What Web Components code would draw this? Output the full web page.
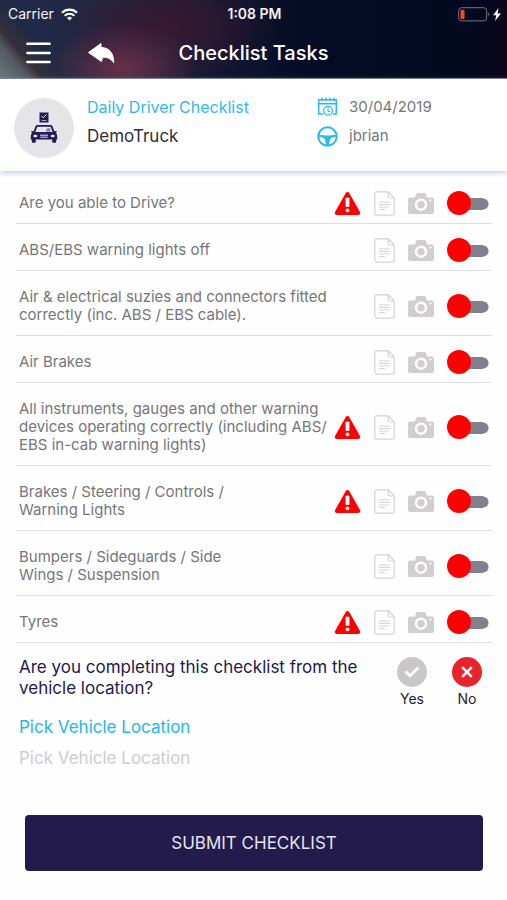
<!DOCTYPE html>
<html lang="en">
<head>
<meta charset="utf-8">
<meta name="viewport" content="width=device-width, initial-scale=1">
<title>Checklist Tasks</title>
<style>
  body { margin: 0; background: #fefefe; color: #76767a; font: 15px/18px Inter, "Liberation Sans", sans-serif; }
</style>
</head>
<body>
<checklist-app></checklist-app>
<script>
const define = (name, html, setup) => {
  const template = document.createElement('template');
  template.innerHTML = '<style>*{box-sizing:border-box}svg{display:block}button{border:0;padding:0;background:none;font:inherit;color:inherit;cursor:pointer}</style>' + html;
  customElements.define(name, class extends HTMLElement {
    constructor() {
      super();
      this.attachShadow({ mode: 'open' }).append(template.content.cloneNode(true));
    }
    connectedCallback() { if (setup) setup(this, this.shadowRoot); }
  });
};

define('status-bar', `
<style>
  :host { display: grid; grid-template-columns: 1fr auto 1fr; align-items: center; height: 28px; padding: 0 6px 0 8px; color: #f3f3f7; font-size: 14px; }
  .carrier, .power { display: flex; align-items: center; gap: 7px; }
  .power { justify-content: flex-end; gap: 3px; }
  time { font-weight: 600; }
</style>
<div class="carrier"><span>Carrier</span>
  <svg width="17" height="13" viewBox="0 0 17 13" fill="none" stroke="#fff" stroke-width="2.2"><path d="M1 4.7a10.8 10.8 0 0 1 15 0M3.7 7.7a6.9 6.9 0 0 1 9.6 0"/><path d="M8.5 12.6 6 10a3.6 3.6 0 0 1 5 0z" fill="#fff" stroke="none"/></svg>
</div>
<time>1:08 PM</time>
<div class="power">
  <svg width="32" height="15" viewBox="0 0 32 15"><rect x=".7" y=".7" width="28" height="13.2" rx="3" fill="none" stroke="#777583"/><rect x="2.5" y="2.7" width="4" height="9.2" rx="1" fill="#f04a32"/><path d="M30.3 5.2q2 2 0 4.5z" fill="#777583"/></svg>
  <svg width="8" height="13" viewBox="0 0 8 13"><path d="M5.5 0 0 7.2h3.3L2 13l6-7.6H4.6z" fill="#fff"/></svg>
</div>`);

define('app-header', `
<style>
  :host { display: block; color: #fff; border-bottom: 1px solid #68748e;
    background:
      linear-gradient(49deg, #6b7880 0, #535960 22px, #37303a 32px, transparent 50px),
      radial-gradient(ellipse 75px 44px at 123px 68px, #673047, transparent),
      radial-gradient(ellipse 110px 55px at 165px 26px, #3a1831, transparent),
      linear-gradient(90deg, #202b47, #202542 25%, #131530 45%, #040b24 62%, #020a20 90%, #09051b); }
  .bar { display: grid; grid-template-columns: 1fr auto 1fr; align-items: center; height: 50px; }
  .actions { display: flex; align-items: center; gap: 36px; padding-left: 26px; }
  h1 { margin: 0; font-size: 20px; line-height: 24px; font-weight: 500; }
</style>
<status-bar></status-bar>
<div class="bar">
  <div class="actions">
    <button aria-label="Menu"><svg width="25" height="22" viewBox="0 0 25 22" stroke="#fff" stroke-width="2.5" stroke-linecap="round"><path d="M1.4 1.7h22.2M1.4 10.9h22.2M1.4 20h22.2"/></svg></button>
    <button aria-label="Back"><svg width="28" height="22" viewBox="0 0 28 22" fill="#fff"><path d="M1.5 10.500 14 1.500v4C22 5.500 26.800 11 26.700 20.800 24.300 16.600 19.500 14.900 15.500 15.300L14.500 19.500z" stroke="#fff" stroke-linejoin="round"/></svg></button>
  </div>
  <h1>Checklist Tasks</h1>
</div>`);

define('vehicle-summary', `
<style>
  :host { display: grid; grid-template-columns: 60px 1fr 176px; align-items: center; column-gap: 13px; height: 92px; padding: 0 14px; background: #fff; box-shadow: 0 2px 5px #c1d0e2; position: relative; }
  .avatar { display: grid; place-items: center; width: 60px; height: 60px; border-radius: 50%; background: #e5e4e9; margin-top: 5px; }
  .names, .facts { display: grid; row-gap: 5px; margin-bottom: 7px; }
  .names { font-size: 17px; line-height: 24px; color: #303034; }
  h2 { margin: 0; font-size: 16px; line-height: 24px; font-weight: 400; color: #31b9ed; }
  .facts div { display: flex; align-items: center; gap: 11px; height: 24px; }
</style>
<div class="avatar">
  <svg width="28" height="34" viewBox="0 0 28 34"><g fill="#251b58"><path d="M9.500 1.500h9v10h-9z"/><path fill-rule="evenodd" d="M7.300 14h13.400q1.300 0 1.800 1.300l1.900 5 1.800-.3q1.600.8-.3 1.900 1.300 1.100 1.300 3v3.600h-1v2.200q0 1-1 1h-2q-1 0-1-1v-2.200H5.800v2.200q0 1-1 1h-2q-1 0-1-1v-2.200h-1v-3.600q0-1.900 1.300-3-1.900-1.100-.3-1.900l1.800.3 1.900-5Q6 14 7.300 14m.5 1.700q-.5 0-.7.6L5.400 21h17.200l-1.700-4.700q-.2-.6-.7-.6z"/></g><path d="m11.500 5 1.800 1.800 3.200-3.300" fill="none" stroke="#eee"/><path d="M11.500 9.500h5" stroke="#a8a4bd"/><path d="M10 24.200h8M10.300 26.200h7.400" stroke="#e6e4ed"/><ellipse cx="5.300" cy="25" rx="2" ry="1.300" fill="#eeedf2"/><ellipse cx="22.700" cy="25" rx="2" ry="1.300" fill="#eeedf2"/><path d="M16 20.500q0-3.500 2.500-3.500t2 3.500" fill="#8c86a8"/></svg>
</div>
<div class="names"><h2>Daily Driver Checklist</h2><span>DemoTruck</span></div>
<div class="facts">
  <div><svg width="21" height="20" viewBox="0 0 21 20" fill="none" stroke="#27baf0" stroke-width="1.5"><path d="M6 17H1.700V2.700h17.600V17H16M1.500 6.800h18"/><path d="M5 .5v4M9 .5v4M13 .5v4M17 .5v4" stroke-width="1.300"/><circle cx="11" cy="13.800" r="4.400" stroke-width="1.200"/><path d="M11 11v3.500h2.200" stroke-width="1"/></svg><span>30/04/2019</span></div>
  <div><svg width="21" height="21" viewBox="0 0 21 21" fill="none" stroke="#27baf0"><circle cx="10.500" cy="10.500" r="9.200" stroke-width="2"/><path d="M1.500 9.200Q4 8.600 7 9.200q3.500.8 7 0 3-.6 5.500 0v1.600Q14 11 12.800 14l-.8 5.500H9L8.200 14Q7 11 1.500 10.800z" fill="#27baf0" stroke="none"/></svg><span>jbrian</span></div>
</div>`);

define('toggle-switch', `
<style>
  :host { display: block; height: 24px; }
  input { appearance: none; display: flex; align-items: center; margin: 0; width: 42px; height: 24px; cursor: pointer;
    background: linear-gradient(#81808c, #81808c) 12px 7px / 24px 12px no-repeat, radial-gradient(circle at 36px 13px, #81808c 5px, transparent 6px); }
  input::before { content: ""; width: 24px; height: 24px; border-radius: 50%; background: #fe0000; }
  input:checked { justify-content: flex-end; }
</style>
<input type="checkbox" role="switch">`, (host, root) => root.querySelector('input').setAttribute('aria-label', host.getAttribute('label')));

define('check-row', `
<style>
  :host { display: flex; align-items: center; justify-content: space-between; padding: 17px 3px 11px; border-bottom: 1px solid #dedee0; }
  p { margin: 0; }
  .tools { display: grid; grid-template-columns: 27px 21px 26px 42px; align-items: center; align-content: center; justify-content: end; column-gap: 13px; height: 18px; flex: none; }
  .warn { visibility: hidden; }
  :host([warning]) .warn { visibility: visible; }
</style>
<p><slot></slot></p>
<div class="tools">
  <svg class="warn" role="img" aria-label="Warning" width="27" height="25" viewBox="0 0 27 25"><path d="M13.500 3 24.200 22H2.800z" fill="#fe0000" stroke="#fe0000" stroke-width="4" stroke-linejoin="round"/><path d="M11.900 7h3.200v8.500h-3.200z" fill="#fff" stroke="#fff" stroke-width=".6" stroke-linejoin="round"/><circle cx="13.500" cy="19.300" r="1.900" fill="#fff"/></svg>
  <button aria-label="Add note"><svg width="21" height="25" viewBox="0 0 21 25" fill="none" stroke="#d4d4d4" stroke-width="1.200"><path d="M2 .8h12.500L20.200 7v15.700q0 1.400-1.400 1.400H2.200Q.8 24.100.8 22.700V2.100Q.8.800 2 .8M14.300 1v4.500q0 1.500 1.500 1.500H20"/><path d="M5 11h11M5 13.500h11M5 16h10M5 18.500h6"/></svg></button>
  <button aria-label="Add photo"><svg width="26" height="21" viewBox="0 0 26 21"><path d="M2 4.500h5L8.200 1Q8.500 0 9.500 0h7q1 0 1.300 1L19 4.500h5q2 0 2 2V19q0 2-2 2H2q-2 0-2-2V6.500q0-2 2-2" fill="#d0cece"/><circle cx="13" cy="11.700" r="5" fill="#d0cece" stroke="#fff" stroke-width="2.500"/><circle cx="22.400" cy="7.500" r="1.100" fill="#fff"/></svg></button>
  <toggle-switch></toggle-switch>
</div>`, (host, root) => root.querySelector('toggle-switch').setAttribute('label', host.textContent.trim()));

define('location-question', `
<style>
  :host { display: block; padding: 14px 3px 0; }
  fieldset { display: flex; justify-content: space-between; margin: 0; padding: 0; border: 0; min-width: 0; }
  .q { font-size: 17px; line-height: 21px; color: #211a4a; }
  .choices { display: flex; gap: 25px; padding-right: 7px; color: #25252a; font-size: 14px; }
  label.choice { position: relative; display: grid; justify-items: center; row-gap: 3px; width: 30px; cursor: pointer; }
  label.choice input { appearance: none; position: absolute; inset: 0; margin: 0; cursor: pointer; }
  .badge { display: grid; place-items: center; width: 30px; height: 30px; border-radius: 50%; background: #cac7c8; }
  input:checked + .badge { background: #e9232b; }
  .field { display: grid; row-gap: 7px; margin-top: 7px; }
  .field label { font-size: 17px; line-height: 24px; color: #25b7e8; }
  .field input { width: 100%; height: 24px; padding: 0; border: 0; background: none; outline: 0; font: inherit; font-size: 17px; }
  ::placeholder { color: #cdcdcf; opacity: 1; }
</style>
<fieldset aria-labelledby="q">
  <div class="q" id="q">Are you completing this checklist from the<br>vehicle location?</div>
  <div class="choices">
    <label class="choice"><input type="radio" name="at" value="yes"><div class="badge"><svg width="16" height="12" viewBox="0 0 16 12" fill="none" stroke="#fff" stroke-width="2.700"><path d="m1.500 5.500 4.500 4.300L14.500 1.500"/></svg></div><span>Yes</span></label>
    <label class="choice"><input type="radio" name="at" value="no" checked><div class="badge"><svg width="12" height="12" viewBox="0 0 12 12" fill="none" stroke="#fff" stroke-width="2.500"><path d="m1.200 1.200 9.600 9.600M10.800 1.200l-9.600 9.600"/></svg></div><span>No</span></label>
  </div>
</fieldset>
<div class="field"><label for="loc">Pick Vehicle Location</label><input id="loc" type="text" placeholder="Pick Vehicle Location"></div>`);

define('submit-button', `
<style>
  :host { display: block; padding: 45px 9px 30px; }
  button { width: 100%; height: 56px; border-radius: 4px; background: #221b4b; color: #e6e4ee; font-size: 17px; }
</style>
<button type="submit"><slot></slot></button>`);

define('checklist-app', `
<style>
  :host { display: block; }
  main { padding: 6px 15px 0 16px; }
</style>
<app-header></app-header>
<vehicle-summary></vehicle-summary>
<main>
  <check-row warning>Are you able to Drive?</check-row>
  <check-row>ABS/EBS warning lights off</check-row>
  <check-row>Air &amp; electrical suzies and connectors fitted<br>correctly (inc. ABS / EBS cable).</check-row>
  <check-row>Air Brakes</check-row>
  <check-row warning>All instruments, gauges and other warning<br>devices operating correctly (including ABS/<br>EBS in-cab warning lights)</check-row>
  <check-row warning>Brakes / Steering / Controls /<br>Warning Lights</check-row>
  <check-row>Bumpers / Sideguards / Side<br>Wings / Suspension</check-row>
  <check-row warning>Tyres</check-row>
  <location-question></location-question>
  <submit-button>SUBMIT CHECKLIST</submit-button>
</main>`);
</script>
</body>
</html>
